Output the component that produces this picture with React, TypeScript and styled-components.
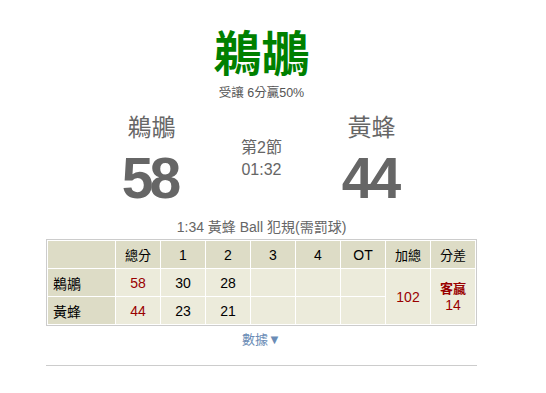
import React from "react";
import styled, { createGlobalStyle } from "styled-components";

const Global = createGlobalStyle`
  html, body { margin: 0; padding: 0; background: #fff; }
  body { font-family: "Liberation Sans", "Noto Sans CJK TC", sans-serif; color: #666; }
`;

const Wrap = styled.div`
  width: 431px;
  margin-left: 46px;
  padding-top: 20px;
  display: flex;
  flex-direction: column;
  align-items: center;
`;

const Title = styled.h1`
  margin: 0;
  font-family: "Noto Sans CJK TC", sans-serif;
  font-size: 48px;
  line-height: 60px;
  font-weight: 700;
  color: #008000;
`;

const Sub = styled.div`
  margin-top: 5px;
  font-size: 12.5px;
  line-height: 16px;
  color: #555;
`;

const Board = styled.div`
  display: flex;
  margin-top: 11px;
  width: 330px;
`;

const Side = styled.div`
  width: 110px;
  display: flex;
  flex-direction: column;
  align-items: center;
`;

const TeamName = styled.div`
  font-family: "Noto Sans CJK TC", sans-serif;
  font-size: 24px;
  line-height: 28px;
  color: #666;
`;

const Score = styled.div`
  margin-top: 10px;
  font-size: 57px;
  font-weight: 700;
  line-height: 56px;
  color: #666;
  letter-spacing: -4px;
  padding-right: 4px;
`;

const Middle = styled.div`
  width: 110px;
  display: flex;
  flex-direction: column;
  align-items: center;
  padding-top: 25px;
  font-size: 16px;
  line-height: 22px;
  color: #666;
`;

const Play = styled.div`
  margin-top: 12px;
  font-size: 14px;
  line-height: 18px;
  color: #666;
`;

const Table = styled.table`
  margin-top: 3px;
  width: 431px;
  border: 1px solid #ccc;
  border-spacing: 1px;
  background: #fff;
  font-size: 14px;
  color: #000;
`;

const Th = styled.th<{ $first?: boolean }>`
  background: #dddcc6;
  font-weight: 400;
  height: 27px;
  padding: 0;
  width: ${(p) => (p.$first ? "67px" : "44px")};
  font-size: 14px;
  text-align: center;
`;

const CjkHead = styled.span`
  font-size: 13px;
`;

const Name = styled.td`
  background: #dddcc6;
  height: 27px;
  padding: 0 0 0 5px;
  font-size: 14px;
  text-align: left;
`;

const Td = styled.td<{ $red?: boolean }>`
  background: #ecebdb;
  height: 27px;
  padding: 0;
  text-align: center;
  color: ${(p) => (p.$red ? "#990000" : "#000")};
`;

const Diff = styled.div`
  color: #990000;
  line-height: 16px;
  font-size: 14px;
  span { font-size: 13px; font-weight: 700; }
`;

const More = styled.div`
  margin-top: 5px;
  font-size: 13px;
  line-height: 18px;
  color: #6b8cb6;
`;

const Rule = styled.hr`
  width: 431px;
  margin: 16px 0 0;
  border: 0;
  border-top: 1px solid #ccc;
`;

export default function App() {
  const cols = ["總分", "1", "2", "3", "4", "OT", "加總", "分差"];
  return (
    <>
      <Global />
      <Wrap>
        <Title>鵜鶘</Title>
        <Sub>受讓 6分贏50%</Sub>
        <Board>
          <Side>
            <TeamName>鵜鶘</TeamName>
            <Score>58</Score>
          </Side>
          <Middle>
            <div>第2節</div>
            <div>01:32</div>
          </Middle>
          <Side>
            <TeamName>黃蜂</TeamName>
            <Score>44</Score>
          </Side>
        </Board>
        <Play>1:34 黃蜂 Ball 犯規(需罰球)</Play>
        <Table>
          <thead>
            <tr>
              <Th $first />
              {cols.map((c) => (
                <Th key={c}>{/[0-9A-Z]/.test(c) ? c : <CjkHead>{c}</CjkHead>}</Th>
              ))}
            </tr>
          </thead>
          <tbody>
            <tr>
              <Name>鵜鶘</Name>
              <Td $red>58</Td>
              <Td>30</Td>
              <Td>28</Td>
              <Td />
              <Td />
              <Td />
              <Td $red rowSpan={2}>102</Td>
              <Td rowSpan={2}>
                <Diff>
                  <span>客贏</span>
                  <br />
                  14
                </Diff>
              </Td>
            </tr>
            <tr>
              <Name>黃蜂</Name>
              <Td $red>44</Td>
              <Td>23</Td>
              <Td>21</Td>
              <Td />
              <Td />
              <Td />
            </tr>
          </tbody>
        </Table>
        <More>數據▼</More>
        <Rule />
      </Wrap>
    </>
  );
}
